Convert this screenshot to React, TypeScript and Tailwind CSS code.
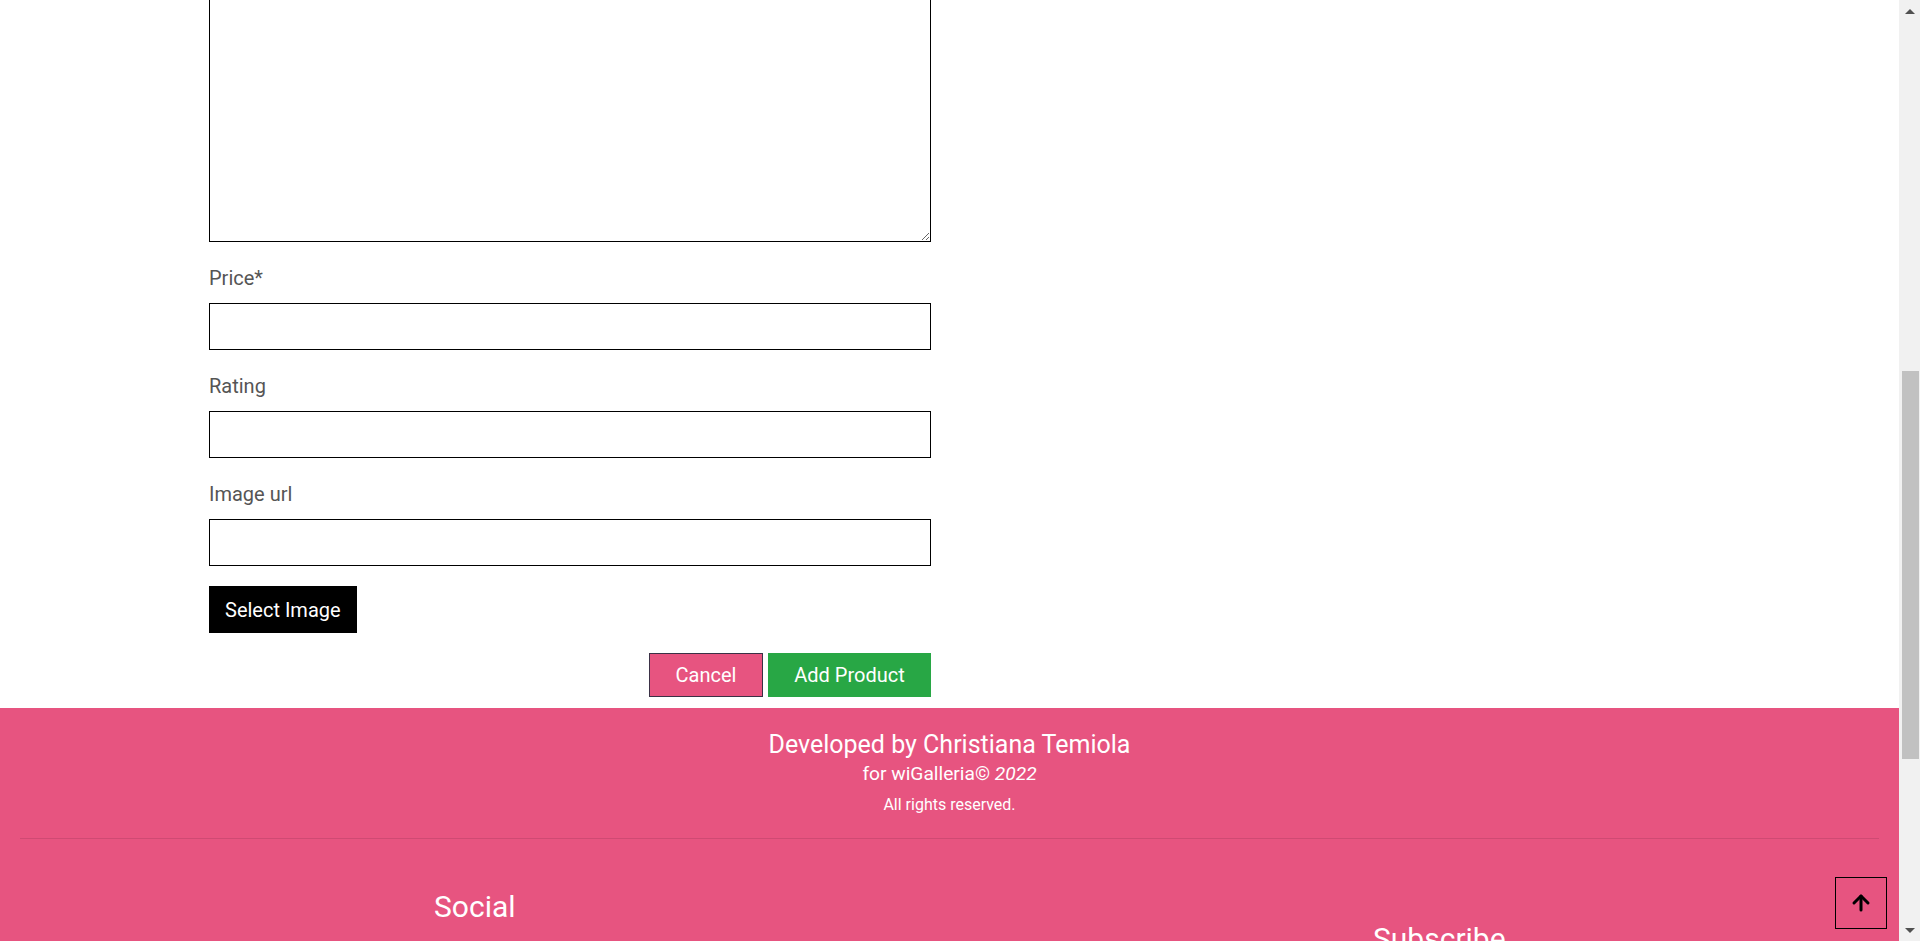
import { ArrowUp } from 'lucide-react';
import { FaFacebookF, FaTwitter, FaInstagram, FaLinkedinIn } from 'react-icons/fa';

const fields = [
  { id: 'price', label: 'Price*' },
  { id: 'rating', label: 'Rating' },
  { id: 'image', label: 'Image url' },
];

export default function App() {
  return (
    <div className="min-h-screen w-[1899px] bg-white font-['Roboto','Liberation_Sans',sans-serif]">
      {/* Product form (page is scrolled, textarea top is cut off) */}
      <main className="ml-[209px] w-[722px] pb-[11px]">
        <textarea className="block w-full h-[300px] -mt-[58px] border border-black resize-y outline-none" />

        {fields.map((f) => (
          <div key={f.id} className="mt-[25px]">
            <label htmlFor={f.id} className="block text-[20px] leading-[22px] text-[#555] mb-[14px]">
              {f.label}
            </label>
            <input id={f.id} type="text" className="block w-full h-[47px] border border-black outline-none px-3" />
          </div>
        ))}

        <button className="mt-[20px] h-[47px] px-[16px] bg-black text-white text-[20px]">Select Image</button>

        <div className="mt-[20px] flex justify-end gap-[5px]">
          <button className="h-[44px] w-[114px] bg-[#e75480] border border-[#3b3146] text-white text-[20px]">
            Cancel
          </button>
          <button className="h-[44px] w-[163px] bg-[#28a745] text-white text-[20px]">Add Product</button>
        </div>
      </main>

      {/* Footer */}
      <footer className="bg-[#e75480] text-white pt-[22px] px-[20px] pb-[60px]">
        <div className="text-center">
          <p className="text-[25px] leading-[29px]">Developed by Christiana Temiola</p>
          <p className="mt-[4px] text-[19.2px] leading-[22px]">
            for wiGalleria© <em>2022</em>
          </p>
          <p className="mt-[10px] text-[16px] leading-[19px]">All rights reserved.</p>
        </div>

        <hr className="mt-[24px] border-0 border-t border-[#cf4a73]" />

        <div className="flex">
          <div className="w-[929px] pl-[414px] pt-[50px]">
            <h3 className="text-[30px] leading-[35px]">Social</h3>
            <div className="mt-[20px] flex gap-4 text-[22px]">
              <FaFacebookF />
              <FaTwitter />
              <FaInstagram />
              <FaLinkedinIn />
            </div>
          </div>
          <div className="flex-1 pl-[424px] pt-[82px]">
            <h3 className="text-[30px] leading-[35px]">Subscribe</h3>
            <p className="mt-[16px] text-[16px]">Get updates on new arrivals</p>
            <div className="mt-[16px] flex">
              <input className="h-[44px] w-[260px] bg-white text-black px-3 outline-none" placeholder="Email" />
              <button className="h-[44px] px-5 bg-black text-white">Subscribe</button>
            </div>
          </div>
        </div>
        <div className="h-[200px]" />
      </footer>

      <button className="fixed bottom-[12px] right-[33px] w-[52px] h-[52px] border border-black flex items-center justify-center">
        <ArrowUp size={24} strokeWidth={3} className="text-black" />
      </button>

      {/* Browser scrollbar as it appears in the capture */}
      <div className="fixed top-0 right-0 w-[21px] h-screen bg-[#f1f1f1] flex flex-col items-center">
        <div className="mt-[9px] w-0 h-0 border-x-[5px] border-x-transparent border-b-[5px] border-b-[#505050]" />
        <div className="mt-[357px] ml-[1px] w-[17px] h-[388px] bg-[#c1c1c1]" />
        <div className="mt-auto mb-[8px] w-0 h-0 border-x-[5px] border-x-transparent border-t-[5px] border-t-[#505050]" />
      </div>
    </div>
  );
}
